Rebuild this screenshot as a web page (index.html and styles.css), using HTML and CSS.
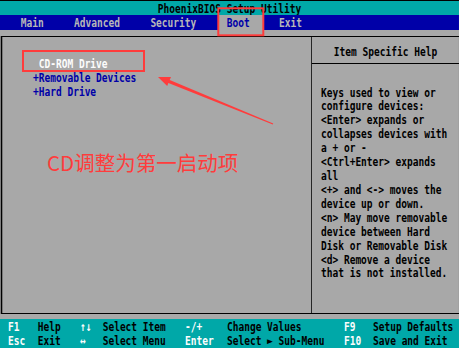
FILE: index.html
```html
<!DOCTYPE html>
<html lang="zh">
<head>
  <meta charset="UTF-8">
  <title>PhoenixBIOS Setup Utility</title>
  <link rel="stylesheet" href="styles.css">
</head>
<body>

  <div class="screen">
    <div class="title">PhoenixBIOS Setup Utility</div>

    <ul class="menu">
      <li>Main</li>
      <li>Advanced</li>
      <li>Security</li>
      <li class="active">Boot</li>
      <li class="last">Exit</li>
    </ul>

    <div class="box">
      <div class="pane list">
        <div class="item sel"> CD-ROM Drive</div>
        <div class="item">+Removable Devices</div>
        <div class="item">+Hard Drive</div>
      </div>

      <div class="pane help">
        <div class="help-head">Item Specific Help</div>
        <div class="help-body">Keys used to view or
configure devices:
&lt;Enter&gt; expands or
collapses devices with
a + or -
&lt;Ctrl+Enter&gt; expands
all
&lt;+&gt; and &lt;-&gt; moves the
device up or down.
&lt;n&gt; May move removable
device between Hard
Disk or Removable Disk
&lt;d&gt; Remove a device
that is not installed.</div>
      </div>
    </div>

    <div class="keys">
      <div class="keyrow">
        <span class="k">F1</span><span>Help</span>
        <span class="k">↑↓</span><span>Select Item</span>
        <span class="k">-/+</span><span>Change Values</span>
        <span class="k">F9</span><span>Setup Defaults</span>
      </div>
      <div class="keyrow">
        <span class="k">Esc</span><span>Exit</span>
        <span class="k">↔</span><span>Select Menu</span>
        <span class="k">Enter</span><span>Select ► Sub-Menu</span>
        <span class="k">F10</span><span>Save and Exit</span>
      </div>
    </div>
  </div>

  <!-- 标注 -->
  <p class="note">CD调整为第一启动项</p>

  <svg class="marks" width="459" height="348" viewBox="0 0 459 348">
    <rect x="218.3" y="8.3" width="45" height="27" />
    <rect x="23" y="51" width="121" height="20" />
    <polygon points="158,77 171,76.9 169.7,79.9 273.2,123.6 272.8,124.4 168.4,83.1 167.2,86.1" />
  </svg>

</body>
</html>
```

FILE: styles.css
```css
html, body {
  margin: 0;
}

body {
  position: relative;
  width: 459px;
  height: 348px;
  overflow: hidden;
  background: #a8a8a8;
  font-family: "DejaVu Sans Mono", monospace;
  font-size: 12.5px;
  font-weight: bold;
  line-height: 13.92px;
  color: #000;
}

/* text mode screen, squeezed to 80 columns */
.screen {
  width: 602.1px;
  margin-right: -143.1px;
  transform: scaleX(.7624);
  transform-origin: 0 0;
}

.title {
  height: 13px;
  padding-top: 1px;
  border-top: 1px solid #000;
  overflow: hidden;
  background: #00a8a8;
  text-align: center;
  line-height: 14px;
}

.menu {
  display: flex;
  margin: 0;
  padding: 0 0 0 17.05px;
  list-style: none;
  background: #0000a8;
  color: #b8b8b8;
}

.menu li {
  padding: 1px 29.8px 0 10.1px;
  line-height: 14px;
}

.menu .active {
  padding-right: 17.4px;
  background: #a8a8a8;
  color: #0000a8;
}

.menu .last {
  padding-left: 21px;
}

.box {
  display: grid;
  grid-template-columns: 405.3px 1fr;
  column-gap: 1.312px;
  height: 276px;
  margin: 6px 0 0 1.312px;
  padding: 1px 0 1px 1.312px;
  background: #000;
}

.pane {
  background: #a8a8a8;
}

.list {
  padding: 20px 0 0 40.7px;
}

.item {
  white-space: pre;
  color: #0000a8;
}

.item.sel {
  color: #fcfcfc;
}

.help-head {
  padding: 8px 0 4px;
  border-bottom: 1px solid #000;
  text-align: center;
  line-height: 14px;
}

.help-body {
  padding: 21.5px 0 0 11.8px;
  white-space: pre;
}

.keys {
  height: 28px;
  margin-top: 5px;
  padding-top: 1px;
  background: #00a8a8;
}

.keyrow {
  display: grid;
  grid-template-columns: 38.95px 55.45px 29.8px 108px 55px 153.5px 38px 1fr;
  padding-left: 10.5px;
  line-height: 14px;
  white-space: pre;
}

.k {
  color: #fcfcfc;
}

/* red annotation */
.note {
  position: absolute;
  left: 47px;
  top: 152px;
  margin: 0;
  font-family: "Noto Sans CJK SC", sans-serif;
  font-size: 20.5px;
  font-weight: normal;
  line-height: 1;
  color: #ff3c3c;
}

.marks {
  position: absolute;
  left: 0;
  top: 0;
  pointer-events: none;
}

.marks rect {
  fill: none;
  stroke: #ff3c3c;
  stroke-width: 2;
}

.marks polygon {
  fill: #ff3c3c;
}
```
